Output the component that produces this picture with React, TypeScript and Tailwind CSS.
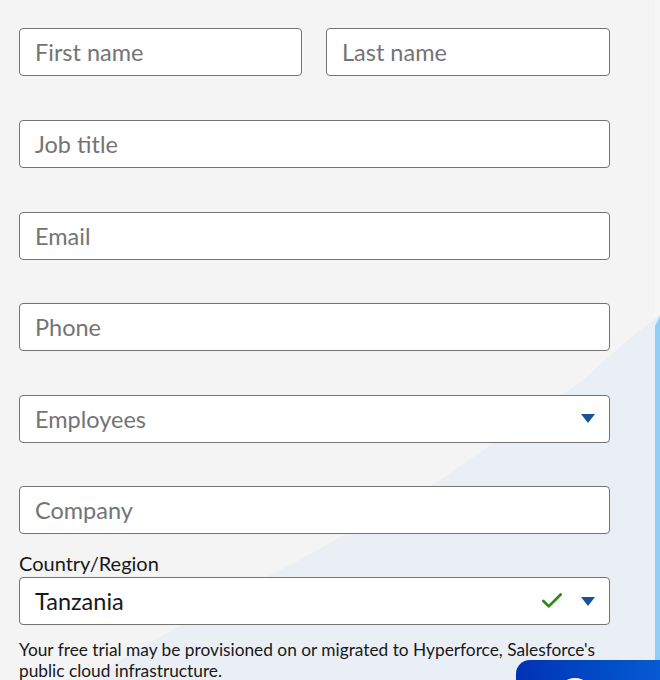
import { Check } from 'lucide-react';

const font = { fontFamily: 'Lato, "Open Sans", sans-serif' };

const Caret = () => (
  <svg width="14" height="9" viewBox="0 0 14 9" className="shrink-0">
    <path d="M0 0 H14 L7 9 Z" fill="#1b5297" />
  </svg>
);

const Field = ({ placeholder, select = false }: { placeholder: string; select?: boolean }) => (
  <div className="flex h-[48px] w-full items-center rounded-[4px] border border-[#747474] bg-white pl-[15px] pr-[14px]">
    <span className="flex-1 text-[23.5px] leading-[28px] text-[#747474]">{placeholder}</span>
    {select && <Caret />}
  </div>
);

export default function App() {
  return (
    <div className="relative h-[680px] w-[660px] overflow-hidden bg-[#f4f4f4]" style={font}>
      {/* Background shapes */}
      <svg className="absolute inset-0" width="660" height="680" viewBox="0 0 660 680">
        <rect x="655" y="0" width="5" height="320" fill="#f7f7f7" />
        <path
          d="M668 308 Q620 345 583 380 Q510 432 440 480 Q385 512 330 543 Q300 560 267 577 Q170 630 70 690 L660 690 Z"
          fill="#eaeff6"
        />
        <path d="M655 326 L660 316 L660 680 L655 680 Z" fill="#8ecef9" />
      </svg>

      {/* Form */}
      <div className="relative flex w-[610px] flex-col pl-[19px] pt-[28px]">
        <div className="flex gap-[24px]">
          <div className="w-[283px]">
            <Field placeholder="First name" />
          </div>
          <div className="w-[284px]">
            <Field placeholder="Last name" />
          </div>
        </div>
        <div className="mt-[44px] flex flex-col gap-[43.6px]">
          <Field placeholder="Job title" />
          <Field placeholder="Email" />
          <Field placeholder="Phone" />
          <Field placeholder="Employees" select />
          <Field placeholder="Company" />
        </div>

        <label className="mt-[16px] text-[20px] leading-[26px] text-[#181818]">Country/Region</label>
        <div className="mt-[1px] flex h-[48px] w-full items-center rounded-[4px] border border-[#747474] bg-white pl-[15px] pr-[14px]">
          <span className="flex-1 text-[23.5px] leading-[28px] text-[#181818]">Tanzania</span>
          <Check className="mr-[16px] h-[26px] w-[26px] text-[#2e8a17]" strokeWidth={2.5} />
          <Caret />
        </div>

        <p className="mt-[14px] w-[600px] text-[17.3px] leading-[21px] text-[#181818]">
          Your free trial may be provisioned on or migrated to Hyperforce, Salesforce's public cloud infrastructure.
        </p>
      </div>

      {/* Floating button */}
      <div className="absolute left-[516px] top-[660px] h-[40px] w-[160px] overflow-hidden rounded-tl-[14px] bg-gradient-to-r from-[#0032b4] to-[#0b5fd8]">
        <div className="absolute left-[42px] top-[18px] h-[34px] w-[34px] rounded-full bg-white" />
      </div>
    </div>
  );
}
